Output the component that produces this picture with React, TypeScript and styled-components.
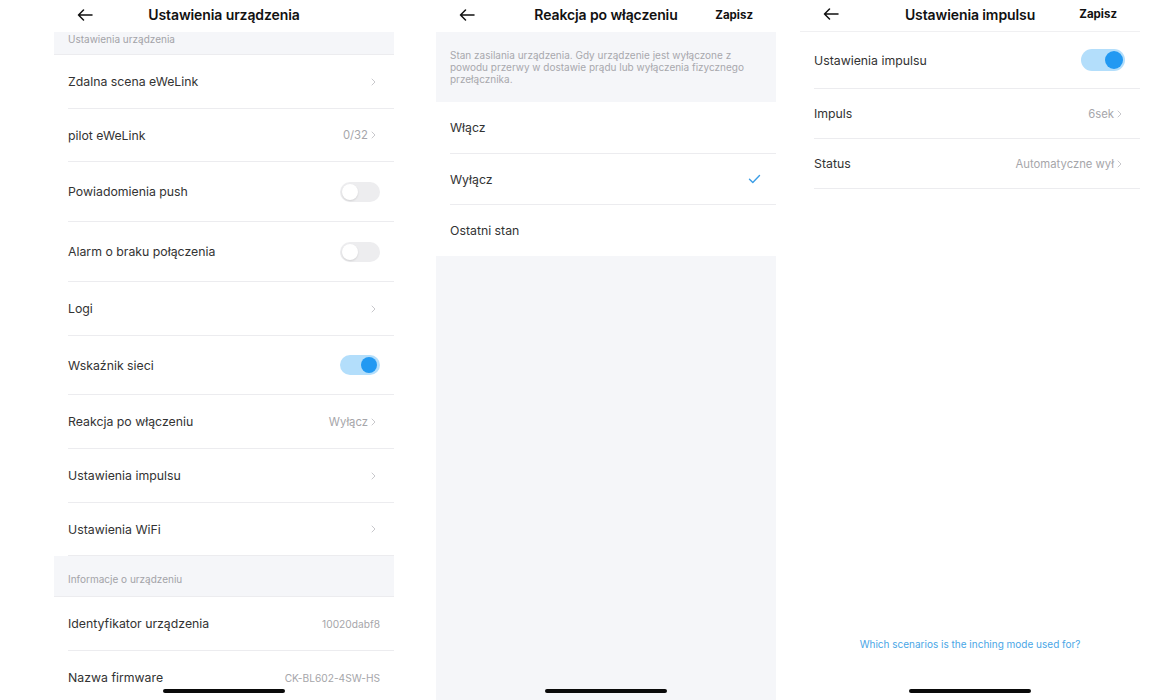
import React from 'react';
import styled, { createGlobalStyle } from 'styled-components';

const GlobalStyle = createGlobalStyle`
  html, body {
    margin: 0;
    padding: 0;
    background: #fff;
    font-family: Inter, "Noto Sans", "Liberation Sans", sans-serif;
    -webkit-font-smoothing: antialiased;
  }
`;

const Page = styled.div`
  display: flex;
  align-items: flex-start;
  width: 1170px;
  height: 700px;
  overflow: hidden;
  background: #fff;
`;

const Screen = styled.div<{ $offset: number; $bg?: string }>`
  position: relative;
  display: flex;
  flex-direction: column;
  width: 340px;
  height: 700px;
  margin-left: ${p => p.$offset}px;
  overflow: hidden;
  background: ${p => p.$bg || '#fff'};
`;

const NavBar = styled.div<{ $border?: boolean }>`
  display: flex;
  align-items: center;
  justify-content: space-between;
  flex-shrink: 0;
  height: 32px;
  padding: 0 23px 3px 23px;
  background: #fff;
  border-bottom: ${p => (p.$border ? '1px solid #f0f0f2' : 'none')};
  box-sizing: border-box;
`;

const NavSide = styled.div`
  display: flex;
  align-items: center;
  width: 50px;
  &:last-child {
    justify-content: flex-end;
  }
`;

const NavTitle = styled.div`
  flex: 1;
  text-align: center;
  font-size: 14px;
  font-weight: 600;
  color: #111;
  letter-spacing: -0.1px;
`;

const SaveButton = styled.span`
  font-size: 11.5px;
  font-weight: 700;
  color: #111;
`;

const SectionBand = styled.div<{ $h: number; $pt: number }>`
  flex-shrink: 0;
  height: ${p => p.$h}px;
  padding: ${p => p.$pt}px 14px 0;
  background: #f5f6f9;
  border-bottom: 1px solid #ececef;
  box-sizing: border-box;
  font-size: 10px;
  line-height: 14px;
  color: #a3a3a8;
`;

const Note = styled.div`
  flex-shrink: 0;
  height: 70px;
  padding: 17px 24px 0 14px;
  background: #f5f6f9;
  box-sizing: border-box;
  font-size: 10px;
  line-height: 12px;
  color: #a8a8ad;
`;

const Row = styled.div<{ $h: number; $last?: boolean; $pr?: number }>`
  display: flex;
  align-items: center;
  flex-shrink: 0;
  height: ${p => p.$h}px;
  margin-left: 14px;
  padding-right: ${p => p.$pr ?? 14}px;
  border-bottom: ${p => (p.$last ? 'none' : '1px solid #ececef')};
  box-sizing: border-box;
  background: #fff;
`;

const Label = styled.span`
  flex: 1;
  font-size: 12.3px;
  color: #333;
`;

const Value = styled.span<{ $small?: boolean }>`
  display: flex;
  align-items: center;
  gap: 3px;
  font-size: ${p => (p.$small ? 10.2 : 11.3)}px;
  color: #a6a6aa;
`;

const Filler = styled.div`
  flex: 1;
  background: #f5f6f9;
`;

const Track = styled.div<{ $on: boolean; $big?: boolean }>`
  position: relative;
  width: ${p => (p.$big ? 44 : 40)}px;
  height: ${p => (p.$big ? 22 : 20)}px;
  border-radius: 11px;
  background: ${p => (p.$on ? '#b3defb' : '#ededef')};
  flex-shrink: 0;
`;

const Knob = styled.div<{ $on: boolean; $big?: boolean }>`
  position: absolute;
  top: 2px;
  left: ${p => (p.$on ? (p.$big ? '24px' : '21px') : '2px')};
  width: ${p => (p.$big ? 18 : 16)}px;
  height: ${p => (p.$big ? 18 : 16)}px;
  border-radius: 50%;
  background: ${p => (p.$on ? '#2299f2' : '#fff')};
  box-shadow: ${p => (p.$on ? 'none' : '0 1px 2px rgba(0,0,0,0.12)')};
`;

const HelpLink = styled.div`
  margin-top: auto;
  margin-bottom: 50px;
  text-align: center;
  font-size: 10px;
  color: #4aa6e6;
`;

const HomeBar = styled.div`
  position: absolute;
  left: 109px;
  bottom: 7px;
  width: 122px;
  height: 4px;
  border-radius: 2px;
  background: #0a0a0a;
`;

const BackArrow = () => (
  <svg width="16" height="12" viewBox="0 0 16 12" fill="none" stroke="#111" strokeWidth="1.5" strokeLinecap="round" strokeLinejoin="round">
    <path d="M15 6H1.5M6.5 1L1.5 6l5 5" />
  </svg>
);

const Chevron = () => (
  <svg width="5" height="8" viewBox="0 0 5 8" fill="none" stroke="#c8c8cc" strokeWidth="1" strokeLinecap="round" strokeLinejoin="round">
    <path d="M1 1l3 3-3 3" />
  </svg>
);

const Check = () => (
  <svg width="13" height="10" viewBox="0 0 13 10" fill="none" stroke="#3a9de6" strokeWidth="1.4" strokeLinecap="round" strokeLinejoin="round">
    <path d="M1.5 5.2l3.3 3.2L11.5 1.5" />
  </svg>
);

const Toggle: React.FC<{ on?: boolean; big?: boolean }> = ({ on = false, big }) => (
  <Track $on={on} $big={big}>
    <Knob $on={on} $big={big} />
  </Track>
);

const Nav: React.FC<{ title: string; save?: boolean; border?: boolean }> = ({ title, save, border }) => (
  <NavBar $border={border}>
    <NavSide>
      <BackArrow />
    </NavSide>
    <NavTitle>{title}</NavTitle>
    <NavSide>{save && <SaveButton>Zapisz</SaveButton>}</NavSide>
  </NavBar>
);

type Item = { label: string; h: number; value?: string; chevron?: boolean; toggle?: boolean; on?: boolean };

const deviceItems: Item[] = [
  { label: 'Zdalna scena eWeLink', h: 54, chevron: true },
  { label: 'pilot eWeLink', h: 53, value: '0/32', chevron: true },
  { label: 'Powiadomienia push', h: 60, toggle: true },
  { label: 'Alarm o braku połączenia', h: 60, toggle: true },
  { label: 'Logi', h: 54, chevron: true },
  { label: 'Wskaźnik sieci', h: 59, toggle: true, on: true },
  { label: 'Reakcja po włączeniu', h: 54, value: 'Wyłącz', chevron: true },
  { label: 'Ustawienia impulsu', h: 54, chevron: true },
  { label: 'Ustawienia WiFi', h: 53, chevron: true },
];

const infoItems: Item[] = [
  { label: 'Identyfikator urządzenia', h: 54, value: '10020dabf8' },
  { label: 'Nazwa firmware', h: 54, value: 'CK-BL602-4SW-HS' },
];

const pulseItems: Item[] = [
  { label: 'Ustawienia impulsu', h: 57, toggle: true, on: true },
  { label: 'Impuls', h: 50, value: '6sek', chevron: true },
  { label: 'Status', h: 50, value: 'Automatyczne wył', chevron: true },
];

const SettingRow: React.FC<{ item: Item; big?: boolean }> = ({ item, big }) => (
  <Row $h={item.h} $pr={item.chevron ? 18 : big ? 15 : 14}>
    <Label>{item.label}</Label>
    {item.toggle ? (
      <Toggle on={item.on} big={big} />
    ) : (
      <Value $small={!item.chevron}>
        {item.value}
        {item.chevron && <Chevron />}
      </Value>
    )}
  </Row>
);

const powerOptions = ['Włącz', 'Wyłącz', 'Ostatni stan'];

export default function App() {
  return (
    <Page>
      <GlobalStyle />
      <Screen $offset={54}>
        <Nav title="Ustawienia urządzenia" />
        <SectionBand $h={23} $pt={0}>Ustawienia urządzenia</SectionBand>
        {deviceItems.map(item => (
          <SettingRow key={item.label} item={item} />
        ))}
        <SectionBand $h={41} $pt={16}>Informacje o urządzeniu</SectionBand>
        {infoItems.map(item => (
          <SettingRow key={item.label} item={item} />
        ))}
        <HomeBar />
      </Screen>

      <Screen $offset={42}>
        <Nav title="Reakcja po włączeniu" save />
        <Note>
          Stan zasilania urządzenia. Gdy urządzenie jest wyłączone z powodu przerwy w dostawie prądu lub wyłączenia fizycznego przełącznika.
        </Note>
        {powerOptions.map((opt, i) => (
          <Row key={opt} $h={i === 0 ? 52 : 51} $last={i === powerOptions.length - 1} $pr={15}>
            <Label>{opt}</Label>
            {opt === 'Wyłącz' && <Check />}
          </Row>
        ))}
        <Filler />
        <HomeBar />
      </Screen>

      <Screen $offset={24}>
        <Nav title="Ustawienia impulsu" save border />
        {pulseItems.map(item => (
          <SettingRow key={item.label} item={item} big />
        ))}
        <HelpLink>Which scenarios is the inching mode used for?</HelpLink>
        <HomeBar />
      </Screen>
    </Page>
  );
}
